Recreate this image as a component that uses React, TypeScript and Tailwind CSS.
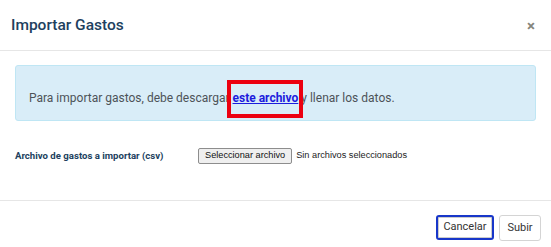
import React from 'react';

export default function App() {
  return (
    <div className="w-[551px] h-[247px] bg-white font-['Roboto',sans-serif] overflow-hidden">
      {/* header */}
      <div className="h-[51px] flex items-center justify-between pl-[11px] pr-[16px] border-b border-[#e6e6e6]">
        <h4 className="text-[15.5px] font-medium leading-none text-[#213f5e] pt-[1px]">Importar Gastos</h4>
        <button className="text-[15px] font-bold leading-none text-[#85857c] pt-[2px]">×</button>
      </div>

      {/* body */}
      <div className="px-[15px] pt-[14px]">
        <div className="h-[56px] rounded-[3px] border border-[#bfe6f4] bg-[#d9edf8] pl-[13px] pt-[24px] text-[12px] leading-[16px] text-[#4d5358]">
          Para importar gastos, debe descargar{' '}
          <span className="relative">
            <a href="#" className="font-bold text-[#1c1cdd] underline">este archivo</a>
            <span className="absolute left-[-6px] right-[-5px] top-[-11px] bottom-[-13px] border-[4px] border-[#ec0010]" />
          </span>
          {' '}y llenar los datos.
        </div>

        <div className="flex items-center mt-[27px] h-[16px]">
          <label className="w-[183px] text-[9.6px] font-bold text-[#213f5e]">Archivo de gastos a importar (csv)</label>
          <div className="flex items-center font-['Liberation_Sans',sans-serif] text-[9.2px] text-[#222]">
            <span className="h-[16px] px-[6px] flex items-center border border-[#8d8d8d] rounded-[2px] bg-[#efefef] text-[#111]">Seleccionar archivo</span>
            <span className="ml-[4px]">Sin archivos seleccionados</span>
          </div>
        </div>
      </div>

      {/* footer */}
      <div className="mt-[36px] border-t border-[#e6e6e6] flex justify-end gap-[5px] pr-[10px] pt-[14px]">
        <button className="h-[25px] w-[58px] rounded-[3px] border-[2px] border-[#1836c9] bg-white text-[11px] text-[#333] shadow-[inset_0_0_0_1px_#ccc]">Cancelar</button>
        <button className="h-[26px] w-[42px] rounded-[3px] border border-[#d4d4d4] bg-white text-[11px] text-[#333]">Subir</button>
      </div>
    </div>
  );
}
